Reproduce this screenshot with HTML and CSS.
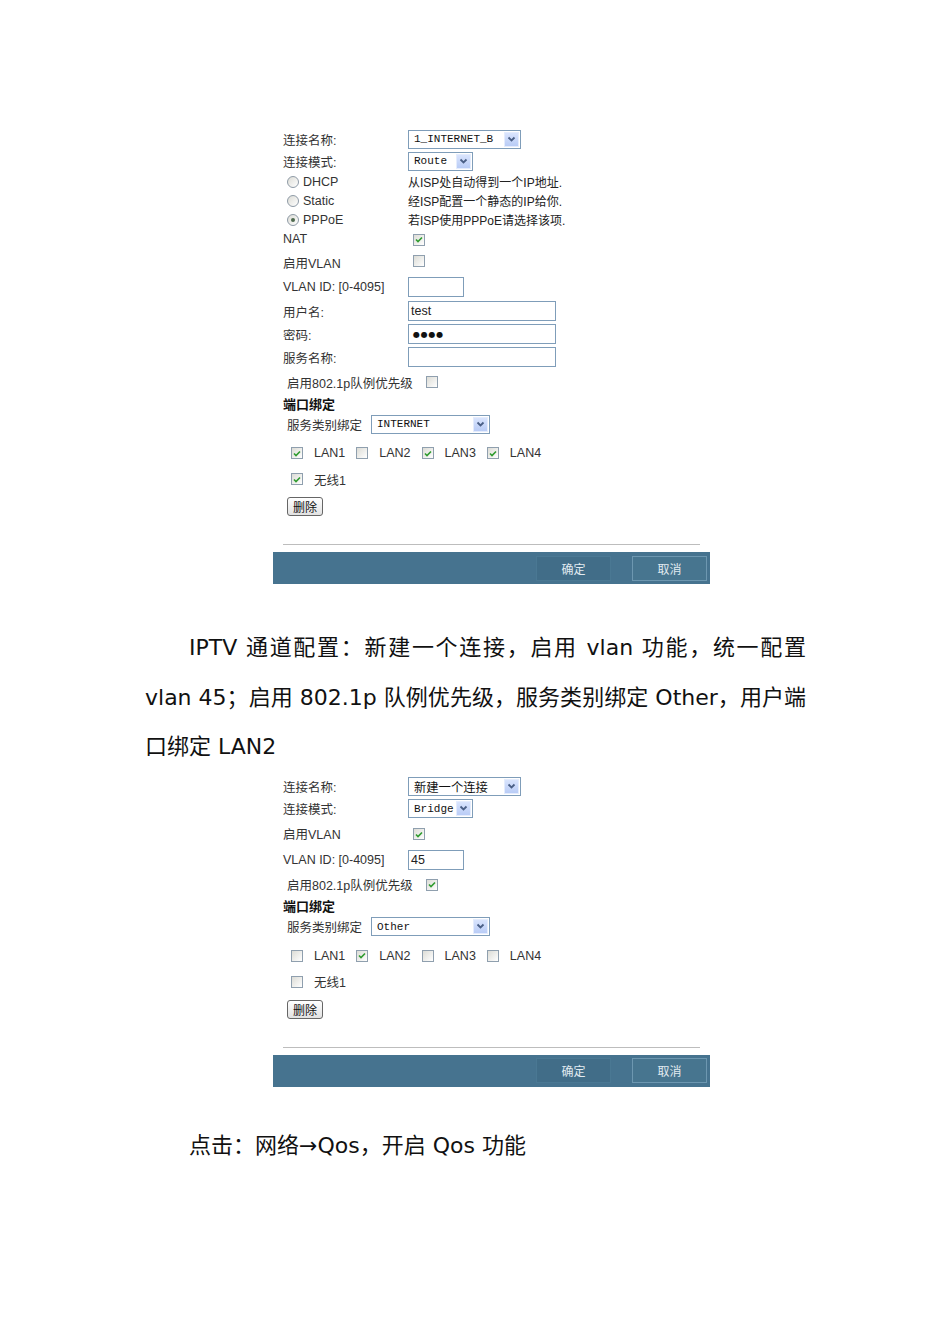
FILE: index.html
```html
<!DOCTYPE html>
<html lang="zh-CN">
<head>
    <meta charset="UTF-8">
    <title>IPTV 通道配置</title>
    <link rel="stylesheet" href="styles.css">
</head>
<body>
    <div class="page">
        <!-- WAN connection: PPPoE internet -->
        <div class="shot">
            <div class="form">
                <div class="row">
                    <div class="label">连接名称:</div>
                    <div class="select wide"><span>1_INTERNET_B</span><span class="select-btn"><svg width="9" height="7" viewBox="0 0 9 7"><polyline points="1.5,1.5 4.5,4.5 7.5,1.5" fill="none" stroke="#4a5f86" stroke-width="1.8"/></svg></span></div>
                </div>
                <div class="row">
                    <div class="label">连接模式:</div>
                    <div class="select narrow"><span>Route</span><span class="select-btn"><svg width="9" height="7" viewBox="0 0 9 7"><polyline points="1.5,1.5 4.5,4.5 7.5,1.5" fill="none" stroke="#4a5f86" stroke-width="1.8"/></svg></span></div>
                </div>
                <div class="row radio">
                    <div class="label opt"><span class="rb"></span>DHCP</div>
                    <div class="desc">从ISP处自动得到一个IP地址.</div>
                </div>
                <div class="row radio">
                    <div class="label opt"><span class="rb"></span>Static</div>
                    <div class="desc">经ISP配置一个静态的IP给你.</div>
                </div>
                <div class="row radio">
                    <div class="label opt"><span class="rb on"></span>PPPoE</div>
                    <div class="desc">若ISP使用PPPoE请选择该项.</div>
                </div>
                <div class="row short">
                    <div class="label">NAT</div>
                    <div class="value"><span class="cb"><svg width="8" height="7" viewBox="0 0 8 7"><polyline points="1,3.5 3,5.5 7,1.5" fill="none" stroke="#2f9b2f" stroke-width="1.6"/></svg></span></div>
                </div>
                <div class="row tall">
                    <div class="label">启用VLAN</div>
                    <div class="value"><span class="cb"></span></div>
                </div>
                <div class="row mid">
                    <div class="label">VLAN ID: [0-4095]</div>
                    <div class="field short"></div>
                </div>
                <div class="row mid">
                    <div class="label">用户名:</div>
                    <div class="field long">test</div>
                </div>
                <div class="row">
                    <div class="label">密码:</div>
                    <div class="field long"><span class="dots">●●●●</span></div>
                </div>
                <div class="row mid">
                    <div class="label">服务名称:</div>
                    <div class="field long"></div>
                </div>
                <div class="row tall sub">启用802.1p队例优先级<span class="cb"></span></div>
                <div class="row head">端口绑定</div>
                <div class="row tall sub">服务类别绑定
                    <div class="select svc"><span>INTERNET</span><span class="select-btn"><svg width="9" height="7" viewBox="0 0 9 7"><polyline points="1.5,1.5 4.5,4.5 7.5,1.5" fill="none" stroke="#4a5f86" stroke-width="1.8"/></svg></span></div>
                </div>
                <div class="row ports">
                    <span class="cb"><svg width="8" height="7" viewBox="0 0 8 7"><polyline points="1,3.5 3,5.5 7,1.5" fill="none" stroke="#2f9b2f" stroke-width="1.6"/></svg></span>LAN1
                    <span class="cb"></span>LAN2
                    <span class="cb"><svg width="8" height="7" viewBox="0 0 8 7"><polyline points="1,3.5 3,5.5 7,1.5" fill="none" stroke="#2f9b2f" stroke-width="1.6"/></svg></span>LAN3
                    <span class="cb"><svg width="8" height="7" viewBox="0 0 8 7"><polyline points="1,3.5 3,5.5 7,1.5" fill="none" stroke="#2f9b2f" stroke-width="1.6"/></svg></span>LAN4
                </div>
                <div class="row short ports">
                    <span class="cb"><svg width="8" height="7" viewBox="0 0 8 7"><polyline points="1,3.5 3,5.5 7,1.5" fill="none" stroke="#2f9b2f" stroke-width="1.6"/></svg></span>无线1
                </div>
                <div class="btn-del">删除</div>
            </div>
            <div class="shot-rule"></div>
            <div class="shot-bar">
                <div class="bar-btn ok">确定</div>
                <div class="bar-btn cancel">取消</div>
            </div>
        </div>

        <p class="para">IPTV 通道配置：新建一个连接，启用 vlan 功能，统一配置 vlan 45；启用 802.1p 队例优先级，服务类别绑定 Other，用户端口绑定 LAN2</p>

        <!-- WAN connection: bridged IPTV on vlan 45 -->
        <div class="shot">
            <div class="form">
                <div class="row">
                    <div class="label">连接名称:</div>
                    <div class="select wide"><span class="cjk">新建一个连接</span><span class="select-btn"><svg width="9" height="7" viewBox="0 0 9 7"><polyline points="1.5,1.5 4.5,4.5 7.5,1.5" fill="none" stroke="#4a5f86" stroke-width="1.8"/></svg></span></div>
                </div>
                <div class="row">
                    <div class="label">连接模式:</div>
                    <div class="select narrow"><span>Bridge</span><span class="select-btn"><svg width="9" height="7" viewBox="0 0 9 7"><polyline points="1.5,1.5 4.5,4.5 7.5,1.5" fill="none" stroke="#4a5f86" stroke-width="1.8"/></svg></span></div>
                </div>
                <div class="row wide">
                    <div class="label">启用VLAN</div>
                    <div class="value"><span class="cb"><svg width="8" height="7" viewBox="0 0 8 7"><polyline points="1,3.5 3,5.5 7,1.5" fill="none" stroke="#2f9b2f" stroke-width="1.6"/></svg></span></div>
                </div>
                <div class="row mid">
                    <div class="label">VLAN ID: [0-4095]</div>
                    <div class="field short">45</div>
                </div>
                <div class="row tall sub">启用802.1p队例优先级<span class="cb"><svg width="8" height="7" viewBox="0 0 8 7"><polyline points="1,3.5 3,5.5 7,1.5" fill="none" stroke="#2f9b2f" stroke-width="1.6"/></svg></span></div>
                <div class="row head">端口绑定</div>
                <div class="row tall sub">服务类别绑定
                    <div class="select svc"><span>Other</span><span class="select-btn"><svg width="9" height="7" viewBox="0 0 9 7"><polyline points="1.5,1.5 4.5,4.5 7.5,1.5" fill="none" stroke="#4a5f86" stroke-width="1.8"/></svg></span></div>
                </div>
                <div class="row ports">
                    <span class="cb"></span>LAN1
                    <span class="cb"><svg width="8" height="7" viewBox="0 0 8 7"><polyline points="1,3.5 3,5.5 7,1.5" fill="none" stroke="#2f9b2f" stroke-width="1.6"/></svg></span>LAN2
                    <span class="cb"></span>LAN3
                    <span class="cb"></span>LAN4
                </div>
                <div class="row short ports">
                    <span class="cb"></span>无线1
                </div>
                <div class="btn-del">删除</div>
            </div>
            <div class="shot-rule"></div>
            <div class="shot-bar">
                <div class="bar-btn ok">确定</div>
                <div class="bar-btn cancel">取消</div>
            </div>
        </div>

        <p class="para last">点击：网络→Qos，开启 Qos 功能</p>
    </div>
</body>
</html>
```

FILE: styles.css
```css
body {
    margin: 0;
    background-color: #FFFFFF;
    font-family: "Liberation Sans", "Noto Sans CJK SC", sans-serif;
    color: #333333;
}
.page {
    padding-top: 128px;
}
.shot {
    width: 437px;
    margin-left: 273px;
}
.form {
    padding-left: 10px;
    font-size: 12.5px;
}
.row {
    display: flex;
    align-items: center;
    height: 22px;
}
.row.radio {
    height: 19px;
}
.row.short {
    height: 20px;
}
.row.mid {
    height: 24px;
}
.row.tall {
    height: 26px;
}
.row.wide {
    height: 28px;
}
.row.head {
    height: 16px;
    font-size: 13px;
    font-weight: bold;
    color: #111111;
}
.row.ports {
    height: 32px;
    padding-left: 8px;
    gap: 11px;
}
.row.ports.short {
    height: 20px;
}
.label {
    width: 125px;
    flex-shrink: 0;
}
.label.opt {
    display: flex;
    align-items: center;
    gap: 4px;
    padding-left: 4px;
    box-sizing: border-box;
}
.desc {
    font-size: 12px;
    color: #222222;
}
.value .cb {
    margin-left: 5px;
}
.sub {
    padding-left: 4px;
    gap: 9px;
}
.sub .cb {
    margin-left: 4px;
}

/* form controls */
.select {
    height: 19px;
    box-sizing: border-box;
    border: 1px solid #7F9DB9;
    background-color: #FFFFFF;
    display: flex;
    align-items: center;
    justify-content: space-between;
    padding: 0 1px 0 5px;
    font-family: "Liberation Mono", "Noto Sans CJK SC", monospace;
    font-size: 11px;
    color: #111111;
}
.select.wide {
    width: 113px;
}
.select.narrow {
    width: 65px;
}
.select.svc {
    width: 119px;
}
.select .cjk {
    font-family: "Noto Sans CJK SC", sans-serif;
    font-size: 12.3px;
}
.select-btn {
    width: 15px;
    height: 15px;
    box-sizing: border-box;
    border: 1px solid #E4ECFD;
    background: linear-gradient(#D9E4FD, #B9CCF6);
    display: flex;
    align-items: center;
    justify-content: center;
}
.field {
    height: 20px;
    box-sizing: border-box;
    border: 1px solid #7F9DB9;
    background-color: #FFFFFF;
    padding-left: 2px;
    display: flex;
    align-items: center;
    color: #222222;
}
.field.short {
    width: 56px;
}
.field.long {
    width: 148px;
}
.dots {
    padding-left: 2px;
    font-family: "DejaVu Sans", sans-serif;
    font-size: 8px;
    letter-spacing: 0.8px;
    color: #111111;
}
.cb {
    width: 12px;
    height: 12px;
    box-sizing: border-box;
    border: 1px solid #8F9FAE;
    background: linear-gradient(135deg, #DCDCD6, #FFFFFF);
    display: inline-flex;
    align-items: center;
    justify-content: center;
    flex-shrink: 0;
}
.rb {
    width: 12px;
    height: 12px;
    box-sizing: border-box;
    border: 1px solid #8E9AA6;
    border-radius: 50%;
    background: linear-gradient(135deg, #DCDCD6, #FFFFFF);
    display: inline-flex;
    align-items: center;
    justify-content: center;
}
.rb.on::after {
    content: "";
    width: 4px;
    height: 4px;
    border-radius: 50%;
    background-color: #4F6A4F;
}
.btn-del {
    display: inline-flex;
    align-items: center;
    height: 19px;
    box-sizing: border-box;
    margin: 8px 0 0 4px;
    padding: 0 5px;
    border: 1px solid #666666;
    border-radius: 3px;
    background: linear-gradient(#FFFFFF, #E2E2E2);
    font-size: 12px;
    color: #111111;
}

/* footer bar with submit buttons */
.shot-rule {
    margin: 28px 10px 0;
    border-top: 1px solid #BDBDBD;
}
.shot-bar {
    margin-top: 7px;
    height: 32px;
    background-color: #46738F;
    display: flex;
    justify-content: flex-end;
    align-items: center;
    gap: 21px;
    padding-right: 3px;
}
.bar-btn {
    width: 75px;
    height: 25px;
    box-sizing: border-box;
    display: flex;
    align-items: center;
    justify-content: center;
    font-size: 12px;
    color: #E2EBF1;
}
.bar-btn.ok {
    background-color: #416D88;
    border: 1px solid #4A7893;
}
.bar-btn.cancel {
    background-color: #47758F;
    border: 1px solid #6D97B0;
}

/* document text */
.para {
    margin: 39px 0 4px 145px;
    width: 661px;
    font-family: "DejaVu Sans", "Noto Sans CJK SC", sans-serif;
    font-size: 22px;
    line-height: 49.5px;
    text-indent: 44px;
    text-align: justify;
    color: #111111;
}
.para.last {
    margin-top: 34px;
}
```
